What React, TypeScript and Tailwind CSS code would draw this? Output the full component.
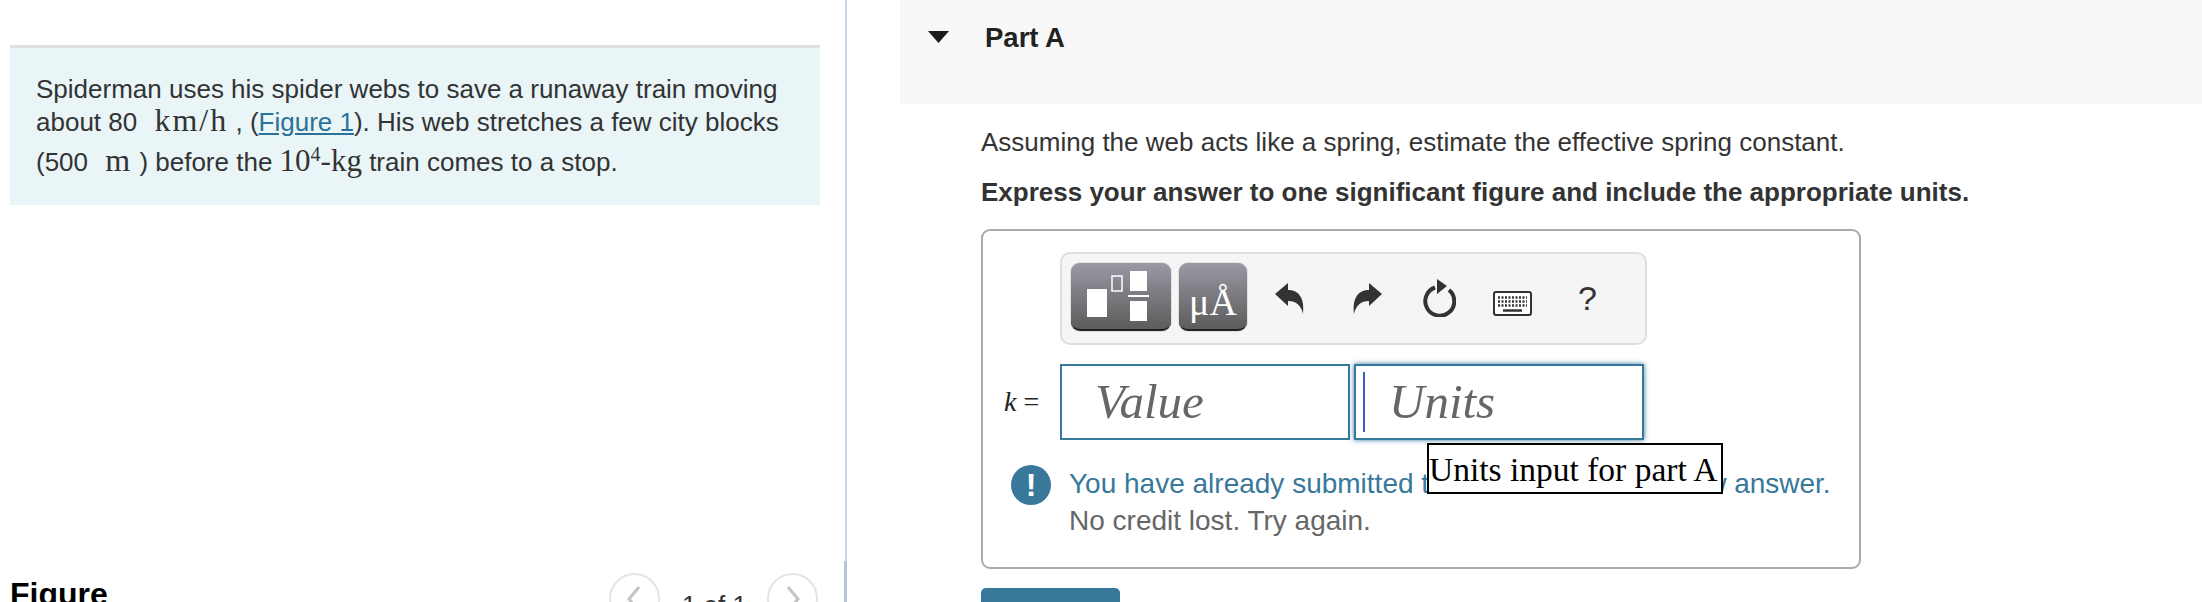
export default function App() {
  return (
    <div className="flex h-[602px] w-[2202px] overflow-hidden bg-white font-['Liberation_Sans',sans-serif] text-[26px] text-[#333]">
      <LeftPane />
      <div className="relative w-[2px] bg-[#c8d6e3]">
        <div className="absolute left-[-1px] top-[561px] h-[41px] w-[3px] bg-[#b4c5d6]" />
      </div>
      <RightPane />
    </div>
  )
}

function Math({ children, wide }: { children: React.ReactNode; wide?: boolean }) {
  return <span className={wide ? "font-['Liberation_Serif',serif] text-[32px] leading-none tracking-[2px]" : "font-['Liberation_Serif',serif] text-[31px] leading-none"}>{children}</span>
}

function LeftPane() {
  return (
    <div className="flex w-[845px] shrink-0 flex-col pl-[10px] pt-[45px]">
      <div className="h-[160px] w-[810px] shrink-0 border-t-[3px] border-[#e0e0e0] bg-[#e9f5f7] pl-[26px] pt-[24px] leading-[34px]">
        <p>Spiderman uses his spider webs to save a runaway train moving</p>
        <p className="-mt-[2px]">
          about 80 <Math wide>&nbsp;km/h</Math> , (<a className="text-[#2b7299] underline">Figure 1</a>). His web stretches a few city blocks
        </p>
        <p className="mt-[5px]">
          (500 <Math wide>&nbsp;m</Math> ) before the <Math>10<sup className="text-[20px]">4</sup>-kg</Math> train comes to a stop.
        </p>
      </div>
      <div className="mt-[368px] flex shrink-0 items-start justify-between pr-[27px]">
        <h2 className="pt-[3px] text-[32px] font-bold leading-[36px] text-black">Figure</h2>
        <div className="flex items-start">
          <NavCircle left />
          <span className="ml-[22px] mr-[20px] mt-[15px] leading-[34px]">1 of 1</span>
          <NavCircle />
        </div>
      </div>
    </div>
  )
}

function NavCircle({ left }: { left?: boolean }) {
  return (
    <div className="flex h-[51px] w-[51px] items-center justify-center rounded-full border-2 border-[#e4e4e4]">
      <svg width="16" height="28" viewBox="0 0 16 28" fill="none" stroke="#c4c4c4" strokeWidth="3">
        <path d={left ? "M13 2 3 14l10 12" : "M3 2l10 12L3 26"} />
      </svg>
    </div>
  )
}

function RightPane() {
  return (
    <div className="flex-1 pl-[53px]">
      <div className="flex h-[104px] items-start bg-[#f8f8f8] pl-[28px] pt-[21px]">
        <svg width="21" height="12" viewBox="0 0 21 12" className="mt-[10px]">
          <path d="M0 0h21L10.5 12z" fill="#1a1a1a" />
        </svg>
        <h1 className="ml-[36px] text-[27.500px] font-bold leading-[34px] text-[#222]">Part A</h1>
      </div>
      <div className="pl-[81px]">
        <p className="mt-[21px] leading-[34px]">Assuming the web acts like a spring, estimate the effective spring constant.</p>
        <p className="mt-[16px] font-bold leading-[34px]">Express your answer to one significant figure and include the appropriate units.</p>
        <AnswerBox />
        <button className="mt-[19px] h-[60px] w-[139px] rounded-[5px] bg-[#37789b] text-white">Submit</button>
      </div>
    </div>
  )
}

function AnswerBox() {
  return (
    <div className="mt-[20px] h-[340px] w-[880px] rounded-[9px] border-2 border-[#aaa] pt-[21px]">
      <Toolbar />
      <div className="mt-[19px] flex items-center pl-[21px]">
        <span className="w-[56px] font-['Liberation_Serif',serif] text-[28px] font-medium text-[#222]">
          <i>k</i> =
        </span>
        <div className="relative flex">
          <div className="flex h-[76px] w-[290px] items-center border-2 border-[#37789b] pl-[33px] font-['Liberation_Serif',serif] text-[49px] italic text-[#666]">
            Value
          </div>
          <div className="ml-[4px] flex h-[76px] w-[290px] items-center border-2 border-[#37789b] pl-[7px] font-['Liberation_Serif',serif] text-[49px] italic text-[#666] shadow-[0_0_5px_#37789b]">
            <div className="mr-[24px] h-[60px] w-[2px] bg-[#3b5fc0]" />
            Units
          </div>
        </div>
      </div>
      <div className="relative mt-[25px] flex pl-[28px]">
        <div className="flex h-[40px] w-[40px] shrink-0 items-center justify-center rounded-full bg-[#37789b] text-[32px] font-bold leading-none text-white">
          !
        </div>
        <div className="ml-[18px] text-[28px] leading-[37px]">
          <p className="text-[#37789b]">You have already submitted this answer. Enter a new answer.</p>
          <p className="text-[#666]">No credit lost. Try again.</p>
        </div>
        <div className="absolute left-[444px] top-[-22px] flex h-[51px] w-[296px] items-center whitespace-nowrap border-2 border-black bg-white pt-[3px] font-['Liberation_Serif',serif] text-[33.500px] leading-none text-black">
          Units input for part A
        </div>
      </div>
    </div>
  )
}

function Toolbar() {
  return (
    <div className="ml-[77px] flex h-[93px] w-[587px] items-start rounded-[10px] border-2 border-[#dedede] bg-[#f5f5f5] pl-[9px] pt-[9px]">
      <div className="h-[68px] w-[100px] rounded-[9px] border-b-2 border-[#222] bg-gradient-to-b from-[#9b99a4] to-[#5c5c5c] shadow-[0_0_1px_#222]">
        <svg width="100" height="68" viewBox="0 0 100 68">
          <rect x="16" y="26" width="20" height="28" fill="#fff" />
          <rect x="41" y="13" width="10" height="15" fill="none" stroke="#fff" strokeWidth="1.5" />
          <rect x="59" y="8" width="17" height="20" fill="#fff" />
          <rect x="57" y="32" width="21" height="2" fill="#fff" />
          <rect x="59" y="38" width="17" height="20" fill="#fff" />
        </svg>
      </div>
      <div className="ml-[8px] flex h-[68px] w-[68px] items-end justify-center rounded-[9px] border-b-2 border-[#222] bg-gradient-to-b from-[#9b99a4] to-[#5c5c5c] pb-[8px] font-['Liberation_Serif',serif] text-[38px] leading-none text-white shadow-[0_0_1px_#222]">
        μÅ
      </div>
      <svg width="30" height="32" viewBox="0 0 30 32" className="ml-[28px] mt-[20px]" fill="#333">
        <path d="M0 11 13 0v7c10 0 17 7 15 24-2-9-7-13-15-13v5z" />
      </svg>
      <svg width="30" height="32" viewBox="0 0 30 32" className="ml-[47px] mt-[20px]" fill="#333">
        <path d="M30 11 17 0v7C7 7 0 14 2 31c2-9 7-13 15-13v5z" />
      </svg>
      <svg width="34" height="38" viewBox="0 0 34 38" className="ml-[40px] mt-[16px]" fill="none">
        <path d="M13 8.500A14.500 14.500 0 1 0 27 11" stroke="#333" strokeWidth="4" />
        <path d="M15 0l10 7-10 8z" fill="#333" />
      </svg>
      <svg width="39" height="25" viewBox="0 0 39 25" className="ml-[37px] mt-[28px]">
        <rect x="1" y="1" width="37" height="23" rx="2" fill="#fff" stroke="#333" strokeWidth="2" />
        <path d="M5 6.500h29M5 10.500h29M5 14.500h29" stroke="#333" strokeWidth="2.500" strokeDasharray="2 1.500" />
        <path d="M10 19.500h19" stroke="#333" strokeWidth="2.500" />
      </svg>
      <span className="ml-[46px] mt-[13px] text-[34px] leading-[44px] text-[#333]">?</span>
    </div>
  )
}
